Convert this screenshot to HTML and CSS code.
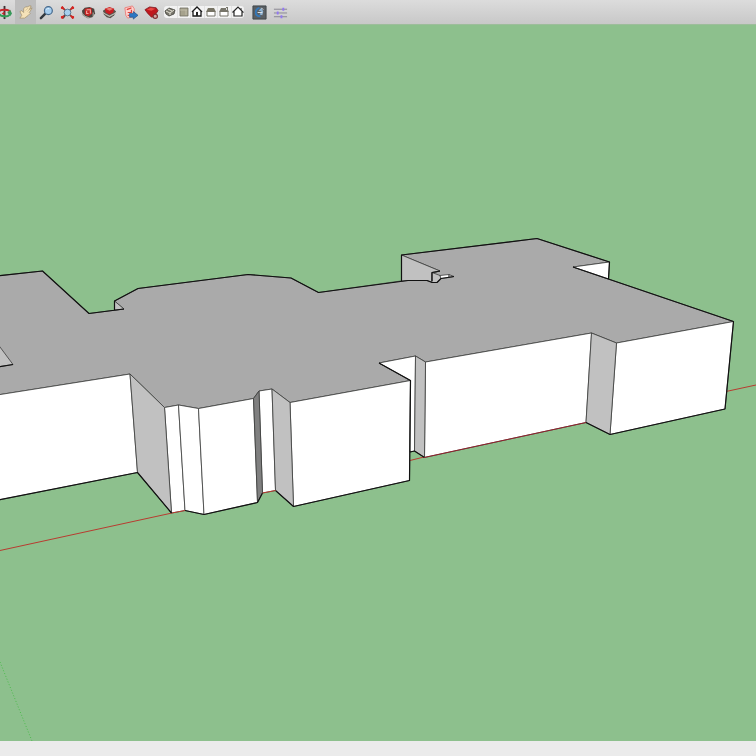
FILE: index.html
```
<!DOCTYPE html>
<html lang="en">
<head>
<meta charset="utf-8">
<meta name="viewport" content="width=device-width, initial-scale=1">
<title>Model</title>
<link rel="stylesheet" href="styles.css">
</head>
<body>
<header class="toolbar">
  <button class="tool" aria-label="Orbit"><svg viewBox="0 0 16 16"><path d="M8 1V15" fill="none" stroke="#3d3436" stroke-width="2"/><path d="M2 8Q2 5 8 5T14 8" fill="none" stroke="#c9262b" stroke-width="2"/><path d="M2 9Q3 12 8 12T13 10" fill="none" stroke="#2f9d55" stroke-width="2.2"/><path d="M11 8 14 5 16 9 14 12Z" fill="#37995a"/><path d="M5 9 8 7V11Z" fill="#c9262b"/></svg></button>
  <button class="tool active" aria-label="Pan"><svg viewBox="0 0 16 16"><path d="M2 14 4 11 2 7 4 6 6 8 6 4 8 2 10 2 12 1 14 1 12 5 15 3 14 5 12 8 13 9 11 11 7 14Z" fill="#f5e2b8" stroke="#a08c67" stroke-width=".7" stroke-linejoin="round"/><path d="M8 6 11 3M10 7 13 4" stroke="#c5ae80" stroke-width=".6"/></svg></button>
  <button class="tool" aria-label="Zoom"><svg viewBox="0 0 16 16"><path d="M7 9 2 14" stroke="#32383e" stroke-width="2.6" stroke-linecap="round"/><circle cx="10" cy="6" r="4.2" fill="#a5cdee" stroke="#45688b" stroke-width="1.3"/><path d="M8 5Q9 3 11 4" fill="none" stroke="#e5f5ff"/></svg></button>
  <button class="tool" aria-label="Zoom Extents"><svg viewBox="0 0 16 16"><path d="M6 10 3 14" stroke="#444" stroke-width="2"/><path d="M2 2 6 6M14 2 10 6M14 14 10 10" stroke="#8c3a36" stroke-width="1.6"/><path d="M1 2 3 1 5 5 1 4ZM15 2 13 1 11 5 15 4ZM15 14 13 15 11 11 15 12ZM1 14 3 15 5 11 1 12Z" fill="#d82320"/><circle cx="8" cy="8" r="3.6" fill="#a5cfee" stroke="#55748d"/></svg></button>
  <button class="tool" aria-label="Get Models"><svg viewBox="0 0 16 16"><path d="M1 6 4 3 9 2 14 4 15 9 12 13 7 14 2 11Z" fill="#4a443f"/><path d="M4 4 11 3 12 9 8 12 4 10Z" fill="#c52424"/><path d="M6 5H10V9M6 6V9H8" fill="none" stroke="#f2a49b" stroke-width="1.2"/><path d="M1 9 4 12 9 14M13 8V12" fill="none" stroke="#aaa79d" stroke-width="1.2"/></svg></button>
  <button class="tool" aria-label="Share Model"><svg viewBox="0 0 16 16"><path d="M1 6 4 4H12L15 7 13 11 9 14 5 13 2 10Z" fill="#59544d"/><path d="M3 4 8 2 13 4 12 8 8 10 4 8Z" fill="#c91d22"/><path d="M4 4 8 3 12 4 8 6Z" fill="#e77d72"/><path d="M1 8 4 10 8 12 12 10 15 8" fill="none" stroke="#bfbbb2" stroke-width="1.2"/></svg></button>
  <button class="tool" aria-label="Share Component"><svg viewBox="0 0 16 16"><path d="M2 3 10 1 12 4 12 12 5 14 3 11Z" fill="#ffd2ce" stroke="#e77a75" stroke-width=".9"/><path d="M4 5 9 3M5 8H9V5M5 11H7" fill="none" stroke="#df443e" stroke-width="1.3"/><path d="M7 9H11V7L16 11 11 15V13H7Z" fill="#2c77c4" stroke="#235087" stroke-width=".7"/></svg></button>
  <button class="tool" aria-label="Extension Warehouse"><svg viewBox="0 0 16 16"><path d="M1 5 6 2 13 3 15 6 11 12 8 13 4 9Z" fill="#bf171e" stroke="#7c171c" stroke-width=".8"/><path d="M3 5 7 3 12 4 8 6Z" fill="#e84a45"/><circle cx="12" cy="12" r="2.3" fill="#d3a9a5" stroke="#802e30" stroke-width="1.3"/></svg></button>
  <div class="views" role="group" aria-label="Views">
    <button class="view" aria-label="Iso"><svg viewBox="0 0 12 12"><path d="M1 5 5 2 11 4 10 8 5 10 2 8Z" fill="#77756b" stroke="#45453f" stroke-width=".8"/><path d="M2 5 6 7 10 4M6 7V9M4 3 8 5" fill="none" stroke="#e4e2d5" stroke-width="1"/></svg></button>
    <button class="view" aria-label="Top"><svg viewBox="0 0 12 12"><path d="M2 2H10V10H2Z" fill="#a6a28d" stroke="#716f62" stroke-width=".8"/><path d="M2 4H9M8 4V9" stroke="#c6c2ae" stroke-width=".8"/></svg></button>
    <button class="view" aria-label="Front"><svg viewBox="0 0 12 12"><path d="M1 6 6 1 11 6M2 5V10H10V5" fill="#fff" stroke="#171717" stroke-width="1.3"/><path d="M5 6H7V10H5Z" fill="#222"/></svg></button>
    <button class="view" aria-label="Right"><svg viewBox="0 0 12 12"><path d="M2 6V10H10V6" fill="#fff" stroke="#77756b"/><path d="M3 2H9L11 6H1Z" fill="#777465"/></svg></button>
    <button class="view" aria-label="Back"><svg viewBox="0 0 12 12"><path d="M2 6V10H10V6" fill="#fff" stroke="#77756b"/><path d="M3 2H8V1H10V4L11 6H1Z" fill="#77756a"/><path d="M8 2H9V4H8Z" fill="#ddd"/></svg></button>
    <button class="view" aria-label="Left"><svg viewBox="0 0 12 12"><path d="M1 6 6 1 11 6H10V10H2V6Z" fill="#fff" stroke="#252525" stroke-width="1.2"/><path d="M9 2V4" stroke="#333"/></svg></button>
  </div>
  <button class="tool" aria-label="Model Viewer"><svg viewBox="0 0 16 16"><path d="M1 1H15V15H1Z" fill="#5a5f63" stroke="#3e4449"/><path d="M8 3Q4 4 4 8T9 12" fill="none" stroke="#3478b9" stroke-width="2"/><path d="M7 6 10 3 12 7 11 11 8 10 10 7Z" fill="#8fb4d3"/><path d="M10 3 12 5M6 8H11" stroke="#e2e8ed"/></svg></button>
  <button class="tool" aria-label="Adjust Settings"><svg viewBox="0 0 16 16"><path d="M1 4.5H15M1 8.5H15M1 12.5H15" stroke="#85838f" stroke-width="1"/><path d="M11 3V6M5 7V10M9 11V14" stroke="#9277f4" stroke-width="2"/></svg></button>
</header>
<main class="viewport">
  <svg class="scene" viewBox="0 25 756 716" preserveAspectRatio="xMinYMin slice" role="img" aria-label="Building model">
    <g class="axes">
      <path class="axis-red" d="M0 550.5 172 513M410 460.5 424 457M726 391.5 756 385"/>
      <path class="axis-green" d="M0 662 32 741"/>
    </g>
    <path class="roof" d="M-9 276.5 42.500 271 89 313.500 124 309 114.500 301 138 288.500 248 274.500 291 278 318.500 292.500 408 280 440 271 401.500 255 537 238.500 609.500 262 573 267 733.500 321.500 616.500 343 591.500 333 425.500 362 415.500 356 379 363 410.500 380.500 290 402.500 272 389 259 391 253.500 398.500 198.500 408.500 178.500 405 164.500 407.500 130 374 -9 396Z"/>
    <g class="wall">
      <path d="M-9 396 130 374 137.500 472.500 -9 501.500Z"/>
      <path d="M164.500 407.500 178.500 405 185 510.500 171.500 513Z"/>
      <path d="M178.500 405 198.500 408.500 204 514.500 185 510.500Z"/>
      <path d="M198.500 408.500 253.500 398.500 257.500 502.500 204 514.500Z"/>
      <path d="M259 391 272 389 275.500 490.500 262.500 493Z"/>
      <path d="M290 402.500 410.500 380.500 409.500 480.500 293.500 506.500Z"/>
      <path d="M379 363 415.500 356 414.500 451 410 452 410.500 380.500Z"/>
      <path d="M425.500 362 591.500 333 586 422.500 424.500 457.500Z"/>
      <path d="M616.500 343 733.500 321.500 725 409 610 434.500Z"/>
      <path d="M573 267 609.500 262 608.500 279Z"/>
    </g>
    <g class="side">
      <path d="M130 374 164.500 407.500 171.500 513 137.500 472.500Z"/>
      <path d="M272 389 290 402.500 293.500 506.500 275.500 490.500Z"/>
      <path d="M415.500 356 425.500 362 424.500 457.500 414.500 451Z"/>
      <path d="M591.500 333 616.500 343 610 434.500 586 422.500Z"/>
      <path d="M401.500 255 440 271 432 272.500V282L427 280.500H408L401.500 281Z"/>
      <path d="M114.500 301 124 309 114.500 310Z"/>
      <path d="M-9 335 0 347 13 364.500 -9 368Z"/>
    </g>
    <path class="shade" d="M253.500 398.500 259 391 262.500 493 257.500 502.500Z"/>
    <path class="side" d="M432 272.500 440 275.500 441 278.500 437 282.500H432Z"/>
    <path class="wall" d="M440 275.500 449 274.500V277.500L441 278.500Z"/>
    <path class="side" d="M449 274.500 454 276.500 449 277.500Z"/>
    <g class="outline">
      <path d="M-9 276.500 42.500 271 89 313.500 124 309M114.500 310V301L138 288.500 248 274.500 291 278 318.500 292.500 408 280.500H427L432 282.500H437L441 278.500 454 276.500"/>
      <path d="M401.500 281V255L537 238.500 609.500 262 608.500 279M573 267 733.500 321.500 725 409 610 434.500 586 422.500"/>
      <path d="M432 281V272.500L440 271M-9 368 13 364.500M379 363 410.500 380.500 409.500 480.500 293.500 506.500 275.500 490.500M262.500 493 257.500 502.500 204 514.500 185 510.500M171.500 513 137.500 472.500 -9 501.500M410 452 414.500 451 424.500 457.500"/>
    </g>
    <path class="base" d="M424 457.500 586 422.500"/>
    <path class="axis-red" d="M172 513 185 510.500M262.500 493 275.500 490.500"/>
  </svg>
</main>
<footer class="statusbar"></footer>
</body>
</html>
```
FILE: styles.css
```
* {
  box-sizing: border-box;
}

body {
  margin: 0;
  min-height: 100vh;
  display: flex;
  flex-direction: column;
  overflow: hidden;
  background: #8dc08d;
  font-family: "Liberation Sans", sans-serif;
}

.toolbar {
  display: flex;
  align-items: center;
  height: 25px;
  margin-left: -6px;
  background: linear-gradient(#dcdcdc, #c8c8c8);
  border-bottom: 1px solid #9dbd9b;
}

button {
  display: grid;
  place-items: center;
  padding: 0;
  border: 0;
  background: none;
}

.tool {
  flex: none;
  width: 21px;
  height: 24px;
}

.tool svg {
  width: 15px;
  height: 15px;
}

.tool.active {
  background: #bdbdbd;
}

.views {
  display: flex;
  flex: none;
  width: 80px;
  height: 12px;
  margin: 0 5px 0 2px;
  border-radius: 3px;
  background: #f2f2f2;
}

.view {
  flex: 1;
  border-right: 1px solid #e2e2e2;
}

.view:last-child {
  border-right: 0;
}

.view svg {
  width: 12px;
  height: 12px;
}

.viewport {
  flex: 1;
  min-height: 0;
  display: flex;
  background: #8dc08d;
}

.scene {
  width: 100%;
  display: block;
}

.roof,
.wall,
.side,
.shade {
  stroke: #3c3c3c;
  stroke-width: 0.8;
  stroke-linejoin: round;
}

.roof {
  fill: #aaa;
}

.wall {
  fill: #fff;
}

.side {
  fill: #c1c1c1;
}

.shade {
  fill: #808080;
}

.outline {
  fill: none;
  stroke: #111;
  stroke-width: 1.2;
  stroke-linejoin: round;
}

.axis-red,
.base {
  fill: none;
  stroke: #b83b30;
  stroke-width: 1;
}

.base {
  stroke: #90202a;
}

.axis-green {
  fill: none;
  stroke: #4cbc4c;
  stroke-width: 1;
  stroke-dasharray: 1 2;
}

.statusbar {
  height: 15px;
  background: #ebebeb;
}
```
